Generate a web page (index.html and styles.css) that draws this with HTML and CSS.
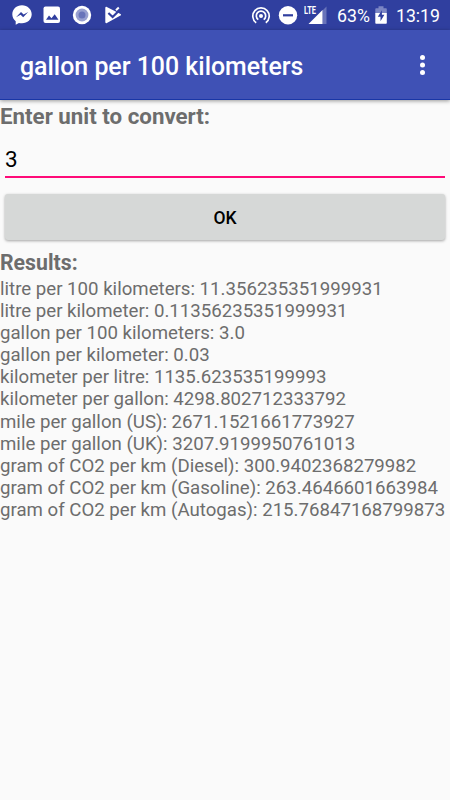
FILE: index.html
```html
<!DOCTYPE html>
<html lang="en">

<head>
    <meta charset="UTF-8">
    <meta name="viewport" content="width=device-width, initial-scale=1.0">
    <title>gallon per 100 kilometers</title>
    <link rel="stylesheet" href="styles.css">
</head>

<body>

    <div class="statusbar">
        <div class="notifications">
            <svg width="20" height="20" viewBox="0 0 20 20">
                <path fill="#fff" d="M10 .3C4.500.3.300 4.200.300 9.300c0 2.900 1.300 5.300 3.400 7v3.400l3.200-1.800c1 .3 2 .4 3.100.4 5.500 0 9.700-4 9.700-9S15.500.3 10 .3z"/>
                <path fill="#303f9f" d="M4 12.300l5-5.400 2.600 2.500 4.600-2.500-5 5.400-2.600-2.600z"/>
            </svg>
            <svg width="18" height="18" viewBox="0 0 18 18">
                <rect x=".5" y=".5" width="16.500" height="16.500" rx="2" fill="#fff"/>
                <path fill="#303f9f" d="M3 13.800l3-4.200 2.500 2.700 3.200-4 3.800 5.500z"/>
            </svg>
            <svg width="20" height="20" viewBox="0 0 20 20">
                <circle cx="10" cy="10" r="9.200" fill="#fff"/>
                <circle cx="10" cy="10" r="6.400" fill="#98a0d0"/>
                <circle cx="10" cy="10" r="3.500" fill="#6974ba"/>
            </svg>
            <svg class="tasks" width="17" height="18" viewBox="0 0 17 18">
                <path fill="#fff" d="M.300 1.800c0-.9.700-1.300 1.500-.9l13.700 7c.8.500.8 1.200 0 1.700L1.900 17c-.9.500-1.600.1-1.600-.9z"/>
                <path fill="none" stroke="#303f9f" stroke-width="2.200" d="M3.400 7l4.200 4L15.500 3.200"/>
                <path fill="none" stroke="#fff" stroke-width="2" d="M11 4.200L13.800 1.500"/>
            </svg>
        </div>
        <div class="system">
            <svg class="hotspot" width="20" height="20" viewBox="0 0 20 20" fill="none" stroke="#fff" stroke-width="1.700">
                <path d="M5.200 17.800a8.200 8.200 0 1 1 9.600 0"/>
                <path d="M7.300 14.600a4.700 4.700 0 1 1 5.400 0"/>
                <circle cx="10" cy="11" r="2" fill="#fff" stroke="none"/>
            </svg>
            <svg class="dnd" width="20" height="20" viewBox="0 0 20 20">
                <circle cx="10" cy="10.300" r="9.200" fill="#fff"/>
                <path d="M5 10.300h10" stroke="#303f9f" stroke-width="2.200"/>
            </svg>
            <svg class="signal" width="24" height="20" viewBox="0 0 24 20">
                <path fill="#6974ba" d="M18.500 5.500L22.500 1.500v17.500h-4z"/>
                <path fill="#fff" d="M4.500 19L18.500 5V19z"/>
                <text x="0" y="9.300" textLength="12" lengthAdjust="spacingAndGlyphs">LTE</text>
            </svg>
            <span class="percent">63%</span>
            <svg class="battery" width="12" height="18" viewBox="0 0 12 18">
                <path fill="#7c86c4" d="M3.500.3h5v1.900H11c.5 0 .8.300.8.800V7.500H.300V3c0-.5.300-.8.800-.8h2.400z"/>
                <path fill="#fff" d="M.300 7h11.500v10c0 .5-.3.800-.8.800H1.100c-.5 0-.8-.3-.8-.8z"/>
                <path fill="#303f9f" d="M6.900 4.300L2.800 10.700h2.700v4.500L9.400 8.800H6.900z"/>
            </svg>
            <span class="clock">13:19</span>
        </div>
    </div>

    <div class="toolbar">
        <div class="title">gallon per 100 kilometers</div>
        <svg class="menu" width="6" height="22" viewBox="0 0 6 22" fill="#fff">
            <circle cx="3.500" cy="3.500" r="2.500"/>
            <circle cx="3.500" cy="11" r="2.500"/>
            <circle cx="3.500" cy="18.500" r="2.500"/>
        </svg>
    </div>

    <form id="form-convert">
        <label for="unit">Enter unit to convert:</label>
        <input type="text" id="unit" name="unit" value="3">
        <button type="button">OK</button>
    </form>

    <h2>Results:</h2>
    <ul class="results">
        <li>litre per 100 kilometers: 11.356235351999931</li>
        <li>litre per kilometer: 0.11356235351999931</li>
        <li>gallon per 100 kilometers: 3.0</li>
        <li>gallon per kilometer: 0.03</li>
        <li>kilometer per litre: 1135.623535199993</li>
        <li>kilometer per gallon: 4298.802712333792</li>
        <li>mile per gallon (US): 2671.1521661773927</li>
        <li>mile per gallon (UK): 3207.9199950761013</li>
        <li>gram of CO2 per km (Diesel): 300.9402368279982</li>
        <li>gram of CO2 per km (Gasoline): 263.4646601663984</li>
        <li>gram of CO2 per km (Autogas): 215.76847168799873</li>
    </ul>

</body>

</html>
```
FILE: styles.css
```css
* {
    box-sizing: border-box;
}

body {
    font-family: Roboto, sans-serif;
    margin: 0;
    padding: 0;
    background-color: #fafafa;
    color: #6d6d6d;
}

svg {
    display: block;
    flex: none;
}

/* Status bar */

.statusbar {
    display: flex;
    justify-content: space-between;
    height: 30px;
    padding: 0 10px 0 12px;
    background-color: #303f9f;
    color: #fff;
}

.notifications,
.system {
    display: flex;
    align-items: center;
}

.notifications {
    gap: 11px;
}

.tasks {
    margin-left: 2px;
}

.dnd {
    margin-left: 7px;
}

.signal {
    margin-left: 6px;
}

.signal text {
    font-size: 10.5px;
    font-weight: bold;
    fill: #fff;
}

.percent {
    margin-left: 9px;
    font-size: 17.7px;
    line-height: 30px;
    padding-top: 1px;
}

.battery {
    margin-left: 5px;
}

.clock {
    margin-left: 9px;
    font-size: 17.7px;
    line-height: 30px;
    padding-top: 1px;
}

/* Toolbar */

.toolbar {
    display: flex;
    align-items: center;
    justify-content: space-between;
    height: 70px;
    padding: 0 25px 0 20px;
    background-color: #3f51b5;
    border-bottom: 1px solid #1936a6;
    box-shadow: 0 1px 4px rgba(0, 0, 0, 0.4);
    color: #fff;
}

.title {
    font-size: 24.9px;
    font-weight: 500;
    line-height: 30px;
    padding-top: 4px;
}

/* Form */

form {
    display: flex;
    flex-direction: column;
}

label,
h2 {
    margin: 0;
    font-size: 22.3px;
    font-weight: bold;
    line-height: 30px;
}

label {
    margin-top: 1px;
}

input {
    height: 40px;
    margin: 7px 5px 0;
    padding: 4px 0 0;
    border: none;
    border-bottom: 2px solid #ff0a78;
    outline: none;
    background: none;
    font-family: inherit;
    font-size: 22.5px;
    color: #000;
}

button {
    height: 46px;
    margin: 16px 5px 0;
    padding: 2px 0 0;
    border: none;
    border-radius: 3px;
    background-color: #d6d8d7;
    box-shadow: 0 1px 3px rgba(0, 0, 0, 0.35);
    font-family: inherit;
    font-size: 17.5px;
    font-weight: 500;
    color: #000;
}

/* Results */

h2 {
    margin-top: 8px;
    font-size: 21.25px;
}

.results {
    margin: 0;
    padding: 0;
    list-style: none;
    font-size: 18.65px;
    line-height: 22.1px;
    white-space: nowrap;
}
```
